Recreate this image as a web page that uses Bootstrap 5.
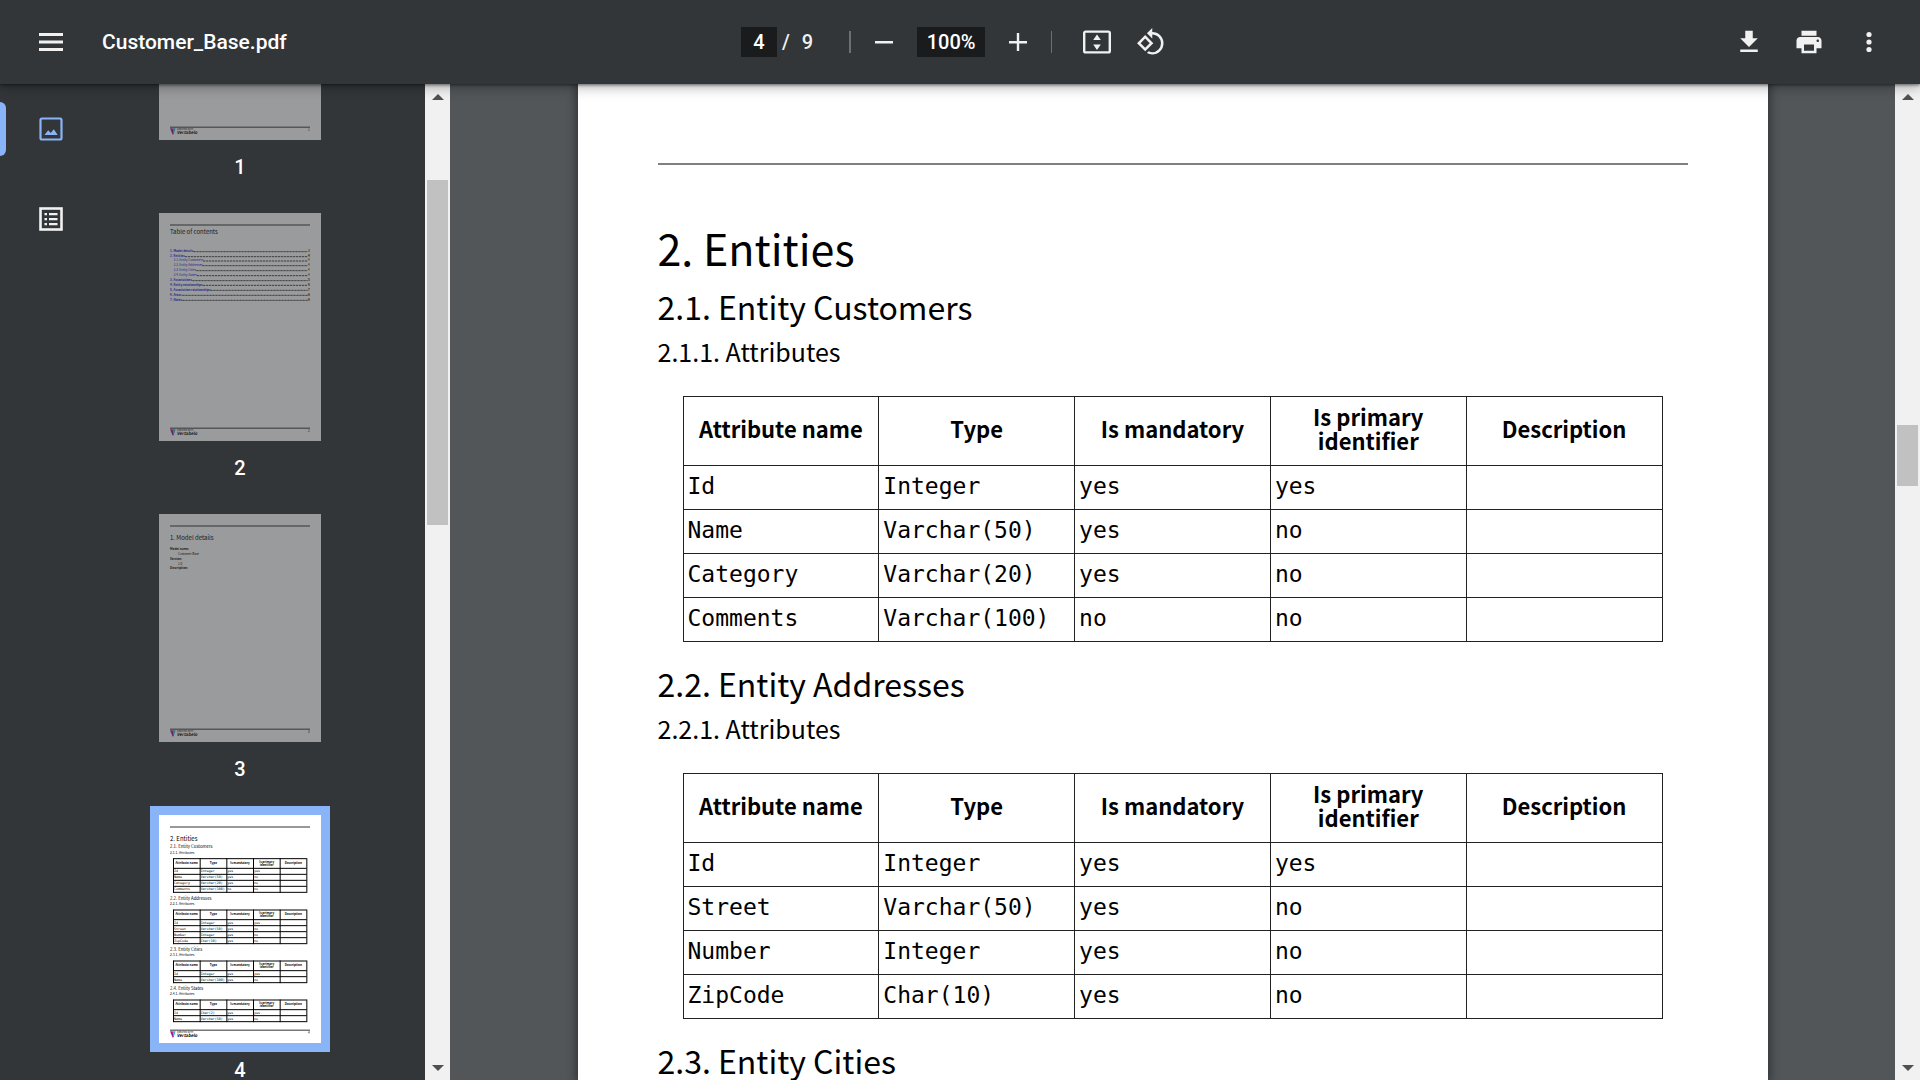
<!DOCTYPE html>
<html lang="en">
<head>
<meta charset="utf-8">
<meta name="viewport" content="width=device-width, initial-scale=1">
<title>Customer_Base.pdf</title>
<link rel="stylesheet" href="https://cdn.jsdelivr.net/npm/bootstrap@5.3.0/dist/css/bootstrap.min.css">
<style>
  body { font-family: Roboto, "Liberation Sans", sans-serif; background: #525659; }
  .viewer-bar { height: 84px; padding: 0 27px; background: #323639; color: #f1f1f1; font-size: 20px; font-weight: 500; z-index: 5;
    box-shadow: 0 1px 3px rgba(0,0,0,.5), 0 3px 12px rgba(0,0,0,.3); }
  .bar-side { flex: 1 1 0; }
  .bar-actions { gap: 12px; }
  .tool { width: 48px; height: 48px; padding: 0; border: 0; color: #f1f1f1; background: none; display: flex; align-items: center; justify-content: center; }
  .tool svg { fill: currentColor; display: block; }
  .doc-title { font-size: 21px; line-height: 30px; font-weight: 500; margin: 0 0 0 27px; color: #fff; }
  .entry { height: 30px; padding: 0; border: 0; background: #191b1c; color: #fff; font: inherit; text-align: center; }
  .entry-page { width: 36px; }
  .entry-zoom { width: 68px; margin: 0 9px; }
  .page-count { margin: 0 36px 0 5px; display: flex; gap: 12px; }
  .bar-rule { width: 1px; height: 22px; margin: 0 21px 0 9px; background: #6d7073; }
  .bar-rule-wide { width: 2px; margin: 0 9px 0 0; }
  .tool-rotate { margin: 0 4px 0 6px; }
  .side { width: 450px; background: #323639; }
  .rail { width: 102px; padding: 18px 0; }
  .rail-tab { height: 54px; width: 100%; margin-bottom: 36px; padding: 0 0 0 39px; border: 0; background: none; color: #f1f1f1; display: flex; align-items: center; }
  .rail-tab svg { display: block; }
  .rail-tab.current { color: #8ab4f8; padding-left: 33px; }
  .rail-tab.current::before { content: ""; width: 6px; height: 54px; background: #8ab4f8; border-radius: 0 6px 6px 0; }
  .rail-tab.current { padding-left: 0; gap: 33px; }
  .thumbs { padding-left: 57px; margin-top: -172px; }
  .thumb { width: 162px; margin-bottom: 34px; color: #fff; font-size: 20px; line-height: 24px; font-weight: 500; text-decoration: none; display: block; text-align: center; }
  .thumb svg { display: block; width: 162px; height: 228px; margin-bottom: 15px; background: #fff; opacity: .5; font-family: "Noto Sans CJK SC", sans-serif; font-weight: 400; }
  .thumb.current svg { opacity: 1; box-shadow: 0 0 0 9px #8ab4f8; }
  .scroller { width: 25px; background: #f1f1f1; flex: none; }
  .scroller .arrow { height: 25px; width: 25px; border: 0; padding: 0; background: none; display: flex; align-items: center; justify-content: center; }
  .knob { width: 21px; margin-left: 2px; background: #c1c1c1; }
  .knob-side { margin-top: 71px; height: 345px; }
  .knob-main { margin-top: 316px; height: 61px; }
  .sheet { width: 100%; max-width: 1190px; padding: 79px 80px 0; background: #fff; color: #000; font-family: "Noto Sans CJK SC", "Noto Sans", sans-serif; box-shadow: 0 0 8px 3px rgba(0,0,0,.35); }
  .sheet-rule { height: 2px; background: #808080; margin-bottom: 54px; }
  .sheet h1 { font-size: 43px; line-height: 56px; font-weight: 400; margin: 0 0 11px; }
  .sheet h2 { font-size: 32px; line-height: 40px; font-weight: 400; margin: 0 0 9px; }
  .sheet h3 { font-size: 25px; line-height: 32px; font-weight: 400; margin: 0 0 29px; }
  .attrs { margin: 0 25px 21px; }
  .attrs table { width: 100%; table-layout: fixed; border-collapse: collapse; }
  .attrs th, .attrs td { border: 1px solid #222; vertical-align: middle; }
  .attrs th { height: 69px; padding: 0 10px 6px; text-align: center; font-size: 22px; line-height: 24px; font-weight: 700; }
  .attrs td { height: 44px; padding: 0 0 4px 4px; font-family: "DejaVu Sans Mono", "Liberation Mono", monospace; font-size: 23px; line-height: 28px; white-space: nowrap; }
</style>
<script src="https://cdn.jsdelivr.net/npm/bootstrap@5.3.0/dist/js/bootstrap.bundle.min.js"></script>
</head>
<body class="vh-100 d-flex flex-column overflow-hidden">

<header class="viewer-bar d-flex align-items-center flex-shrink-0 position-relative">
  <div class="bar-side d-flex align-items-center">
    <button class="tool" type="button" aria-label="Menu"><svg width="24" height="18"><path d="M0 0h24v3H0zM0 7.5h24v3H0zM0 15h24v3H0z"/></svg></button>
    <p class="doc-title">Customer_Base.pdf</p>
  </div>
  <div class="d-flex align-items-center">
    <input class="entry entry-page" type="text" value="4" aria-label="Page number">
    <span class="page-count"><span>/</span><span>9</span></span>
    <span class="bar-rule bar-rule-wide"></span>
    <button class="tool" type="button" aria-label="Zoom out"><svg width="30" height="30" viewBox="0 0 30 30"><path d="M6 14h18v2.500H6z"/></svg></button>
    <input class="entry entry-zoom" type="text" value="100%" aria-label="Zoom level">
    <button class="tool" type="button" aria-label="Zoom in"><svg width="30" height="30" viewBox="0 0 30 30"><path d="M6 14h7.800V6h2.400v8H24v2.400h-7.800V24h-2.400v-7.600H6z"/></svg></button>
    <span class="bar-rule"></span>
    <button class="tool" type="button" aria-label="Fit to page"><svg width="28" height="24" viewBox="0 0 28 24"><rect x="1.200" y="1.600" width="25.600" height="20.800" rx="1.500" fill="none" stroke="currentColor" stroke-width="2.400"/><path d="M14 4.500l3.800 5.500h-7.600zM14 20l3.800-5.500h-7.600z"/></svg></button>
    <button class="tool tool-rotate" type="button" aria-label="Rotate counterclockwise"><svg width="30" height="30" viewBox="0 0 24 24"><path d="M7.340 6.410L.86 12.900l6.490 6.480 6.490-6.480-6.500-6.490zM3.690 12.900l3.660-3.660L11 12.900l-3.660 3.660-3.650-3.660zm15.670-6.260A8.950 8.950 0 0 0 13 4V.76L8.760 5 13 9.240V6c1.790 0 3.580.68 4.950 2.050a7.007 7.007 0 0 1 0 9.900 6.973 6.973 0 0 1-7.790 1.440l-1.490 1.490C10.020 21.620 11.510 22 13 22c2.300 0 4.610-.88 6.360-2.640a8.980 8.980 0 0 0 0-12.720z"/></svg></button>
  </div>
  <div class="bar-side bar-actions d-flex align-items-center justify-content-end">
    <button class="tool" type="button" aria-label="Download"><svg width="30" height="30" viewBox="0 0 24 24"><path d="M19 9h-4V3H9v6H5l7 7 7-7zM5 18v2h14v-2H5z"/></svg></button>
    <button class="tool" type="button" aria-label="Print"><svg width="30" height="30" viewBox="0 0 24 24"><path d="M19 8H5c-1.660 0-3 1.340-3 3v6h4v4h12v-4h4v-6c0-1.660-1.340-3-3-3zm-3 11H8v-5h8v5zm3-7c-.55 0-1-.45-1-1s.45-1 1-1 1 .45 1 1-.45 1-1 1zm-1-9H6v4h12V3z"/></svg></button>
    <button class="tool" type="button" aria-label="More actions"><svg width="30" height="30" viewBox="0 0 30 30"><circle cx="15" cy="7.500" r="2.600"/><circle cx="15" cy="15" r="2.600"/><circle cx="15" cy="22.500" r="2.600"/></svg></button>
  </div>
</header>

<div class="d-flex flex-grow-1 overflow-hidden">
  <aside class="side d-flex flex-shrink-0 overflow-hidden">
    <div class="rail flex-shrink-0">
      <button class="rail-tab current" type="button" aria-label="Thumbnails"><svg width="24" height="24"><rect x="1.500" y="1.500" width="21" height="21" rx="1.500" fill="none" stroke="currentColor" stroke-width="2.200"/><path fill="currentColor" d="M5.500 18l3.700-4.800 2.500 2.800 3.100-3.800 3.900 5.800z"/></svg></button>
      <button class="rail-tab" type="button" aria-label="Document outline"><svg width="24" height="24"><rect x="1.500" y="1.500" width="21" height="21" fill="none" stroke="currentColor" stroke-width="2.600"/><path fill="currentColor" d="M5.500 6h2.500v2.200H5.500zM10 6h8.500v2.200H10zM5.500 11h2.500v2.200H5.500zM10 11h8.500v2.200H10zM5.500 16h2.500v2.200H5.500zM10 16h8.500v2.200H10z"/></svg></button>
    </div>
    <nav class="thumbs flex-grow-1" id="thumbs" aria-label="Page thumbnails"></nav>
    <div class="scroller d-flex flex-column">
      <button class="arrow" type="button" aria-label="Scroll thumbnails up"><svg width="12" height="6"><path fill="#505050" d="M6 0l6 6H0z"/></svg></button>
      <div class="knob knob-side"></div>
      <button class="arrow mt-auto" type="button" aria-label="Scroll thumbnails down"><svg width="12" height="6"><path fill="#505050" d="M6 6l6-6H0z"/></svg></button>
    </div>
  </aside>

  <main class="flex-grow-1 d-flex justify-content-center overflow-hidden">
    <article class="sheet" id="sheet">
      <div class="sheet-rule"></div>
      <h1>2. Entities</h1>
      <h2>2.1. Entity Customers</h2>
      <h3>2.1.1. Attributes</h3>
      <div class="attrs"><table>
        <thead><tr><th scope="col">Attribute name</th><th scope="col">Type</th><th scope="col">Is mandatory</th><th scope="col">Is primary identifier</th><th scope="col">Description</th></tr></thead>
        <tbody>
          <tr><td>Id</td><td>Integer</td><td>yes</td><td>yes</td><td></td></tr>
          <tr><td>Name</td><td>Varchar(50)</td><td>yes</td><td>no</td><td></td></tr>
          <tr><td>Category</td><td>Varchar(20)</td><td>yes</td><td>no</td><td></td></tr>
          <tr><td>Comments</td><td>Varchar(100)</td><td>no</td><td>no</td><td></td></tr>
        </tbody>
      </table></div>
      <h2>2.2. Entity Addresses</h2>
      <h3>2.2.1. Attributes</h3>
      <div class="attrs"><table>
        <thead><tr><th scope="col">Attribute name</th><th scope="col">Type</th><th scope="col">Is mandatory</th><th scope="col">Is primary identifier</th><th scope="col">Description</th></tr></thead>
        <tbody>
          <tr><td>Id</td><td>Integer</td><td>yes</td><td>yes</td><td></td></tr>
          <tr><td>Street</td><td>Varchar(50)</td><td>yes</td><td>no</td><td></td></tr>
          <tr><td>Number</td><td>Integer</td><td>yes</td><td>no</td><td></td></tr>
          <tr><td>ZipCode</td><td>Char(10)</td><td>yes</td><td>no</td><td></td></tr>
        </tbody>
      </table></div>
      <h2>2.3. Entity Cities</h2>
    </article>
  </main>
  <div class="scroller d-flex flex-column">
    <button class="arrow" type="button" aria-label="Scroll up"><svg width="12" height="6"><path fill="#505050" d="M6 0l6 6H0z"/></svg></button>
    <div class="knob knob-main"></div>
    <button class="arrow mt-auto" type="button" aria-label="Scroll down"><svg width="12" height="6"><path fill="#505050" d="M6 6l6-6H0z"/></svg></button>
  </div>
</div>

<script>
  // Builds the miniature pages of the sidebar; one page is 486 x 684 drawing units.
  const text = (x, y, size, s, extra = '') => `<text x="${x}" y="${y}" font-size="${size}" ${extra}>${s}</text>`;
  const footer = n => `<path d="M33 645.500h420" stroke="#333" stroke-width="3"/>
    <path d="M33 649h8l4 16-4 3z" fill="#e0189a"/><path d="M41 649h9l-5 14z" fill="#2ab9c8"/><path d="M36 649l7 8-2 8z" fill="#7a1bb0"/>
    ${text(54, 654, 7, 'CREATED WITH')}${text(53, 667, 13, 'Vertabelo', 'font-weight="700" font-style="italic"')}${text(447, 656, 9, n)}`;
  const rule = '<path d="M33 36h420" stroke="#333" stroke-width="3"/>';

  const toc = [
    [33, 117, 'Model details', '1.', 3, 103], [33, 132, 'Entities', '2.', 4, 78], [44, 145, 'Entity Customers', '2.1.', 4, 132],
    [44, 159, 'Entity Addresses', '2.2.', 4, 130], [44, 174, 'Entity Cities', '2.3.', 4, 112], [44, 189, 'Entity States', '2.4.', 4, 114],
    [33, 204, 'Associations', '3.', 5, 100], [33, 218, 'Entity relationships', '4.', 6, 131], [33, 233, 'Association relationships', '5.', 7, 154],
    [33, 248, 'Areas', '6.', 8, 70], [33, 263, 'Notes', '7.', 9, 70]
  ].map(([x, y, name, no, page, end]) => {
    const w = x === 33 ? 'font-weight="700"' : '';
    return text(x, y, 9, `${no} ${name}`, `fill="#1a0de0" ${w}`) +
      `<path d="M${end} ${y - 1}H446" stroke="#222" stroke-width="2.500" stroke-dasharray="7 2"/>` + text(447, y, 9, page, w);
  }).join('');

  const details = text(33, 77, 18, '1. Model details') + text(33, 108, 9, 'Model name:', 'font-weight="700"') +
    text(57, 123, 9, 'Customer Base') + text(33, 138, 9, 'Version:', 'font-weight="700"') + text(57, 152, 9, '1.0') +
    text(33, 165, 9, 'Description:', 'font-weight="700"');

  const entity = (no, name, y, rows) => {
    let out = text(33, y - 31, 13, `${no}. Entity ${name}`) + text(33, y - 14, 10, `${no}.1. Attributes`);
    const h = 29 + rows.length * 18;
    let d = `M43 ${y}h400M43 ${y + 29}h400`;
    rows.forEach((r, i) => {
      d += `M43 ${y + 47 + i * 18}h400`;
      r.forEach((c, k) => { out += text(45 + k * 80, y + 41 + i * 18, 10, c, 'font-family="DejaVu Sans Mono, Liberation Mono, monospace"'); });
    });
    for (let k = 0; k < 6; k++) d += `M${43.5 + k * 80} ${y - 1.5}v${h + 3}`;
    const head = 'font-weight="700" text-anchor="middle"';
    out += text(83, y + 16, 9, 'Attribute name', head) + text(163, y + 16, 9, 'Type', head) + text(243, y + 16, 9, 'Is mandatory', head) +
      text(323, y + 12, 9, 'Is primary', head) + text(323, y + 21, 9, 'identifier', head) + text(403, y + 16, 9, 'Description', head);
    return out + `<path d="${d}" stroke="#000" stroke-width="3"/>`;
  };
  const entities = text(33, 78, 18, '2. Entities') +
    entity('2.1', 'Customers', 131, [['Id', 'Integer', 'yes', 'yes'], ['Name', 'Varchar(50)', 'yes', 'no'], ['Category', 'Varchar(20)', 'yes', 'no'], ['Comments', 'Varchar(100)', 'no', 'no']]) +
    entity('2.2', 'Addresses', 285, [['Id', 'Integer', 'yes', 'yes'], ['Street', 'Varchar(50)', 'yes', 'no'], ['Number', 'Integer', 'yes', 'no'], ['ZipCode', 'Char(10)', 'yes', 'no']]) +
    entity('2.3', 'Cities', 438, [['Id', 'Integer', 'yes', 'yes'], ['Name', 'Varchar(100)', 'yes', 'no']]) +
    entity('2.4', 'States', 555, [['Id', 'Char(2)', 'yes', 'yes'], ['Name', 'Varchar(50)', 'yes', 'no']]);

  const pages = ['', rule + text(33, 62, 18, 'Table of contents') + toc, rule + details, rule + entities];
  document.getElementById('thumbs').innerHTML = pages.map((p, i) =>
    `<a class="thumb${i === 3 ? ' current' : ''}" href="#sheet"><svg viewBox="0 0 486 684" role="img" aria-label="Page ${i + 1}">${p}${footer(i + 1)}</svg>${i + 1}</a>`).join('');
</script>
</body>
</html>
